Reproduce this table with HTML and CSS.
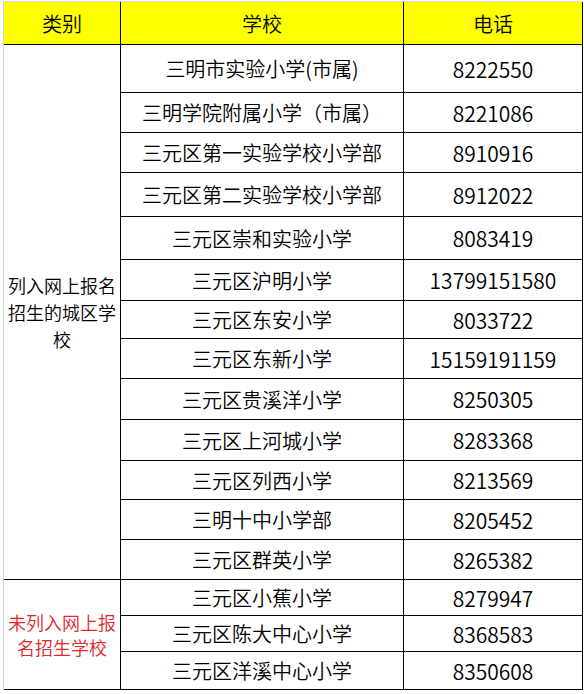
FILE: index.html
```html
<!DOCTYPE html>
<html lang="zh-CN">
<head>
<meta charset="utf-8">
<title>学校电话</title>
<link rel="stylesheet" href="styles.css">
</head>
<body>
<table class="sheet">
  <colgroup>
    <col class="c-cat">
    <col class="c-school">
    <col class="c-tel">
  </colgroup>
  <thead>
    <tr class="h-head">
      <th>类别</th>
      <th>学校</th>
      <th>电话</th>
    </tr>
  </thead>
  <tbody>
    <tr class="h48">
      <td class="cat" rowspan="13">列入网上报名招生的城区学校</td>
      <td class="school">三明市实验小学(市属)</td>
      <td class="tel">8222550</td>
    </tr>
    <tr class="h40"><td class="school">三明学院附属小学（市属）</td><td class="tel">8221086</td></tr>
    <tr class="h40"><td class="school">三元区第一实验学校小学部</td><td class="tel">8910916</td></tr>
    <tr class="h44"><td class="school">三元区第二实验学校小学部</td><td class="tel">8912022</td></tr>
    <tr class="h43"><td class="school">三元区崇和实验小学</td><td class="tel">8083419</td></tr>
    <tr class="h41"><td class="school">三元区沪明小学</td><td class="tel">13799151580</td></tr>
    <tr class="h38"><td class="school">三元区东安小学</td><td class="tel">8033722</td></tr>
    <tr class="h40"><td class="school">三元区东新小学</td><td class="tel">15159191159</td></tr>
    <tr class="h41"><td class="school">三元区贵溪洋小学</td><td class="tel">8250305</td></tr>
    <tr class="h41"><td class="school">三元区上河城小学</td><td class="tel">8283368</td></tr>
    <tr class="h39"><td class="school">三元区列西小学</td><td class="tel">8213569</td></tr>
    <tr class="h40"><td class="school">三明十中小学部</td><td class="tel">8205452</td></tr>
    <tr class="h40"><td class="school">三元区群英小学</td><td class="tel">8265382</td></tr>
    <tr class="h36">
      <td class="cat red" rowspan="3">未列入网上报名招生学校</td>
      <td class="school">三元区小蕉小学</td>
      <td class="tel">8279947</td>
    </tr>
    <tr class="h36"><td class="school">三元区陈大中心小学</td><td class="tel">8368583</td></tr>
    <tr class="h38"><td class="school">三元区洋溪中心小学</td><td class="tel">8350608</td></tr>
  </tbody>
</table>
</body>
</html>
```

FILE: styles.css
```css
html, body {
  margin: 0;
  padding: 0;
  background: #ffffff;
}

body {
  padding-left: 3px;
  padding-top: 1px;
  font-family: "Noto Sans CJK SC", "Noto Sans", sans-serif;
  font-weight: 350;
  color: #000000;
}

.sheet {
  border-collapse: separate;
  border-spacing: 0;
  table-layout: fixed;
  width: 579px;
  border-left: 1px solid #cfd3d8;
  border-top: 1px solid #dcdcdc;
}

.c-cat { width: 117px; }
.c-school { width: 283px; }
.c-tel { width: 179px; }

.sheet th,
.sheet td {
  padding: 0;
  border-right: 1px solid #000000;
  border-bottom: 1px solid #000000;
  text-align: center;
  vertical-align: middle;
  box-sizing: border-box;
  overflow: hidden;
}

.sheet th {
  background: #ffff00;
  font-weight: 350;
  font-size: 20px;
}

.school {
  font-size: 20px;
  white-space: nowrap;
}

.tel {
  font-size: 21px;
  white-space: nowrap;
}

.cat {
  font-size: 18px;
  line-height: 27px;
  padding: 0 3px;
}

.cat.red {
  color: #e3262a;
  line-height: 25px;
}

.h-head { height: 43px; }
.h48 { height: 48px; }
.h44 { height: 44px; }
.h43 { height: 43px; }
.h41 { height: 41px; }
.h40 { height: 40px; }
.h39 { height: 39px; }
.h38 { height: 38px; }
.h36 { height: 36px; }
```
